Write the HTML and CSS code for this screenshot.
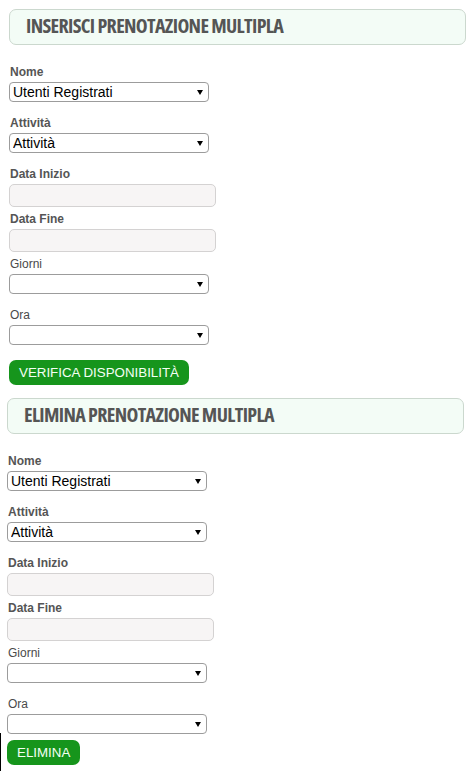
FILE: index.html
```html
<!DOCTYPE html>
<html lang="it">
<head>
<meta charset="utf-8">
<title>Prenotazione multipla</title>
<link rel="stylesheet" href="styles.css">
</head>
<body>
<div class="page">
  <section class="panel panel-a">
    <h2 class="title"><span class="title-text">INSERISCI PRENOTAZIONE MULTIPLA</span></h2>
    <div class="field field-select first">
      <label class="lbl">Nome</label>
      <div class="sel"><select><option>Utenti Registrati</option></select></div>
    </div>
    <div class="field field-select">
      <label class="lbl">Attività</label>
      <div class="sel"><select><option>Attività</option></select></div>
    </div>
    <div class="field field-input">
      <label class="lbl">Data Inizio</label>
      <input class="txt" type="text">
    </div>
    <div class="field field-input">
      <label class="lbl">Data Fine</label>
      <input class="txt" type="text">
    </div>
    <div class="field field-select">
      <label class="lbl lbl-light">Giorni</label>
      <div class="sel"><select><option></option></select></div>
    </div>
    <div class="field field-select last">
      <label class="lbl lbl-light">Ora</label>
      <div class="sel"><select><option></option></select></div>
    </div>
    <button class="btn btn-a" type="button">VERIFICA DISPONIBILITÀ</button>
  </section>

  <section class="panel panel-b">
    <h2 class="title"><span class="title-text">ELIMINA PRENOTAZIONE MULTIPLA</span></h2>
    <div class="field field-select first">
      <label class="lbl">Nome</label>
      <div class="sel"><select><option>Utenti Registrati</option></select></div>
    </div>
    <div class="field field-select">
      <label class="lbl">Attività</label>
      <div class="sel"><select><option>Attività</option></select></div>
    </div>
    <div class="field field-input">
      <label class="lbl">Data Inizio</label>
      <input class="txt" type="text">
    </div>
    <div class="field field-input">
      <label class="lbl">Data Fine</label>
      <input class="txt" type="text">
    </div>
    <div class="field field-select">
      <label class="lbl lbl-light">Giorni</label>
      <div class="sel"><select><option></option></select></div>
    </div>
    <div class="field field-select last">
      <label class="lbl lbl-light">Ora</label>
      <div class="sel"><select><option></option></select></div>
    </div>
    <button class="btn btn-b" type="button">ELIMINA</button>
  </section>
  <div class="edge"></div>
</div>
</body>
</html>
```
FILE: styles.css
```css
html, body {
  margin: 0;
  padding: 0;
  background: #ffffff;
}

body {
  font-family: "Liberation Sans", Arial, sans-serif;
  color: #555555;
}

.page {
  position: relative;
  width: 469px;
  height: 771px;
  overflow: hidden;
}

.panel-a {
  padding: 9px 0 0 9px;
}

.panel-b {
  padding: 13px 0 0 7px;
}

.title {
  margin: 0;
  box-sizing: border-box;
  width: 457px;
  height: 36px;
  border: 1px solid #cbd8ce;
  border-radius: 7px;
  background: #f3fcf6;
  padding-left: 16px;
  font-family: "Open Sans", "DejaVu Sans Condensed", sans-serif;
  font-stretch: 75%;
  font-weight: 700;
  font-size: 20px;
  letter-spacing: -0.65px;
  line-height: 32px;
  color: #555555;
  white-space: nowrap;
}

.title-text {
  display: inline-block;
}

.field {
  display: flex;
  flex-direction: column;
  align-items: flex-start;
}

.field.first {
  margin-top: 20px;
}

.field-select {
  margin-bottom: 14px;
}

.field-input {
  margin-bottom: 5px;
}

.field.last {
  margin-bottom: 0;
}

.lbl {
  display: block;
  font-size: 12px;
  font-weight: bold;
  line-height: 15px;
  color: #555555;
  margin: 0 0 2px 1px;
}

.lbl-light {
  font-weight: normal;
  color: #4a4a4a;
}

.sel {
  position: relative;
  width: 200px;
  height: 20px;
}

.sel select {
  -webkit-appearance: none;
  appearance: none;
  box-sizing: border-box;
  width: 200px;
  height: 20px;
  margin: 0;
  border: 1px solid #9c9c9c;
  border-radius: 4px;
  background: #ffffff;
  padding: 0 0 0 3px;
  font-family: "Liberation Sans", Arial, sans-serif;
  font-size: 14px;
  color: #000000;
  outline: none;
}

.sel::after {
  content: "";
  position: absolute;
  right: 6px;
  top: 8px;
  width: 0;
  height: 0;
  border-left: 3.5px solid transparent;
  border-right: 3.5px solid transparent;
  border-top: 5px solid #000000;
  pointer-events: none;
}

.txt {
  box-sizing: border-box;
  width: 207px;
  height: 23px;
  margin: 0;
  border: 1px solid #d4d2d2;
  border-radius: 5px;
  background: #f7f5f5;
  padding: 0 4px;
  outline: none;
}

.btn {
  display: block;
  height: 25px;
  margin: 0;
  border: 0;
  border-radius: 7px;
  background: #16951c;
  color: #f4fff4;
  padding: 0 10px;
  font-family: "Liberation Sans", Arial, sans-serif;
  font-size: 13.33px;
  line-height: 25px;
}

.btn-a {
  margin-top: 15px;
}

.btn-b {
  margin-top: 6px;
}

.edge {
  position: absolute;
  left: 0;
  top: 733px;
  width: 1px;
  height: 38px;
  background: #000000;
}
```
